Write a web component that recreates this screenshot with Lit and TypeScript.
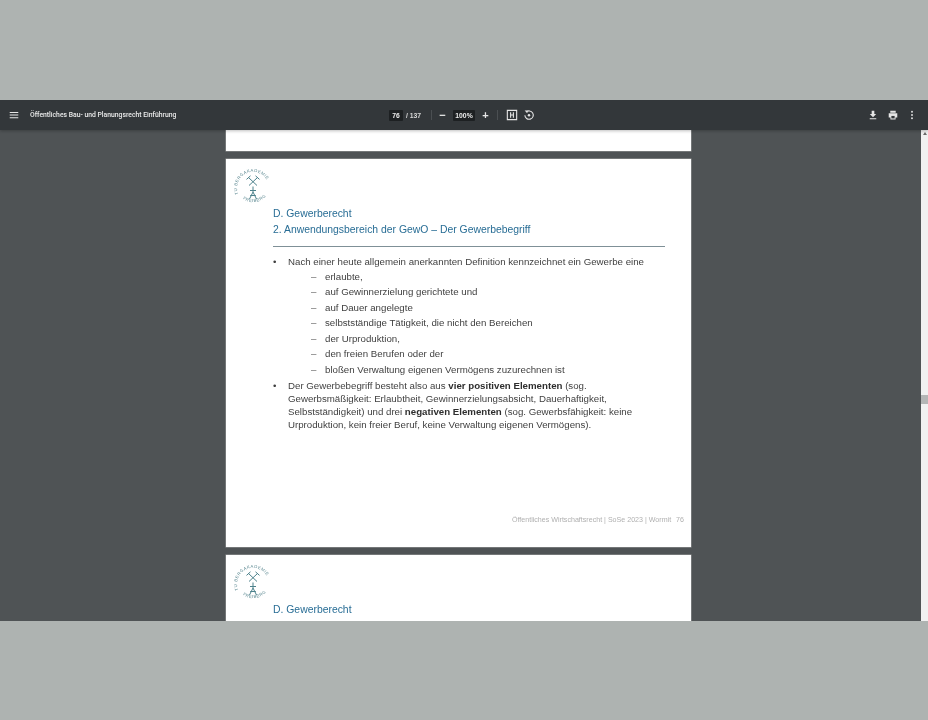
import { LitElement, html, css, svg } from "lit";
import { customElement } from "lit/decorators.js";

const logo = (id: string) => html`<svg class="logo" viewBox="0 0 36 40" width="36" height="40" aria-hidden="true">
  <defs>
    <path id="top${id}" d="M4.2 29 A16 16 0 1 1 31.8 29"></path>
    <path id="bot${id}" d="M6.2 30.5 A17.5 17.5 0 0 0 29.8 30.5"></path>
  </defs>
  <text class="ring"><textPath href="#top${id}" startOffset="2">TU BERGAKADEMIE</textPath></text>
  <text class="ring"><textPath href="#bot${id}" startOffset="2">FREIBERG</textPath></text>
  <g class="mark">
    <path d="M13.5 10.5 L22 18.5 M22.5 10.5 L14 18.5 M11.5 12.4 L15.5 8.8 M20.5 8.8 L24.5 12.4"></path>
    <path d="M18 19.5 L18 25 M14.5 32 L18 25 L21.5 32 M15 23.5 L21 23.5 M15.2 28.5 L20.8 28.5"></path>
  </g>
</svg>`;

const ICONS = {
  menu: svg`<path d="M3.5 5h11v1.3h-11zM3.5 8.4h11v1.3h-11zM3.5 11.8h11v1.3h-11z" fill="currentColor"></path>`,
  fit: svg`<path d="M3 3h12v12H3z" fill="none" stroke="currentColor" stroke-width="1.4"></path><path d="M6.5 5.5h1.4v2.8h2.2V5.5h1.4v7h-1.4V9.7H7.9v2.8H6.5z" fill="currentColor"></path>`,
  rotate: svg`<path d="M5.2 5.4A5.4 5.4 0 1 1 3.7 9.2" fill="none" stroke="currentColor" stroke-width="1.4"></path><path d="M3.4 3.2h3.6v3.6z" fill="currentColor"></path><circle cx="9" cy="9.2" r="1.6" fill="currentColor"></circle>`,
  download: svg`<path d="M7.3 3.5h3.4v4.3h2.4L9 12 4.9 7.8h2.4zM4.8 13.2h8.4v1.3H4.8z" fill="currentColor"></path>`,
  print: svg`<path d="M5.5 3.5h7v2.6h-7zM3.5 6.8h11v5.4h-2.2v2.5H5.7v-2.5H3.5z" fill="currentColor"></path><path d="M6.9 10.2h4.2v3.2H6.9z" fill="#33373a"></path>`,
  more: svg`<circle cx="9" cy="4.8" r="1.2" fill="currentColor"></circle><circle cx="9" cy="9" r="1.2" fill="currentColor"></circle><circle cx="9" cy="13.2" r="1.2" fill="currentColor"></circle>`,
};
const icon = (n: keyof typeof ICONS, cls = "") => html`<svg class="ic ${cls}" viewBox="0 0 18 18" width="14" height="14" aria-hidden="true">${ICONS[n]}</svg>`;

const SUB = ["erlaubte,", "auf Gewinnerzielung gerichtete und", "auf Dauer angelegte", "selbstständige Tätigkeit, die nicht den Bereichen", "der Urproduktion,", "den freien Berufen oder der", "bloßen Verwaltung eigenen Vermögens zuzurechnen ist"];

@customElement("app-root")
export class AppRoot extends LitElement {
  static styles = css`
    :host { display: flex; flex-direction: column; width: 928px; height: 720px; background: #aeb3b1; font-family: "Liberation Sans", Arial, sans-serif; overflow: hidden; }
    .band { height: 100px; flex: none; }
    .viewer { height: 521px; flex: none; display: flex; flex-direction: column; background: #4f5355; overflow: hidden; filter: blur(0.45px); }
    .bar { height: 30px; flex: none; display: grid; grid-template-columns: 1fr auto 1fr; align-items: center; background: #33373a; color: #f1f1f1; padding: 0 9px 0 7px; box-sizing: border-box; z-index: 1; box-shadow: 0 1px 3px rgba(0,0,0,.25); }
    .left { display: flex; align-items: center; gap: 9px; min-width: 0; }
    .title { font-family: Roboto, "Liberation Sans", sans-serif; font-size: 6.8px; font-weight: 500; color: #ececec; white-space: nowrap; }
    .mid { display: flex; align-items: center; font-size: 6.8px; color: #d8d8d8; font-weight: 700; margin-left: -1px; }
    .box { background: #1d2022; color: #eee; height: 11px; line-height: 11px; text-align: center; border-radius: 1px; }
    .pg { width: 14px; margin-right: 3px; }
    .count { width: 16px; white-space: nowrap; }
    .zm { width: 22px; margin: 0 4px; }
    .sep { width: 1px; height: 10px; background: #4b4f52; }
    .sep.a { margin: 0 4px 0 9px; }
    .sep.b { margin: 0 7px 0 5px; }
    .ic { display: block; flex: none; color: #e6e6e6; }
    .rot { margin-left: 3px; }
    .sym { width: 13px; display: flex; justify-content: center; font-size: 11px; line-height: 11px; color: #e6e6e6; }
    .right { display: flex; justify-content: flex-end; align-items: center; gap: 5.5px; }
    .body { flex: 1; display: flex; min-height: 0; }
    .scroller { flex: 1; display: flex; flex-direction: column; align-items: center; gap: 8px; overflow: hidden; padding-right: 4px; box-sizing: border-box; }
    .scrollbar { width: 7px; flex: none; background: #f1f1f1; display: flex; flex-direction: column; align-items: center; box-sizing: border-box; }
    .arrow { margin-top: 2px; width: 0; height: 0; border-left: 2px solid transparent; border-right: 2px solid transparent; border-bottom: 3px solid #6a6a6a; }
    .thumb { width: 7px; height: 9px; background: #b4b6b6; margin-top: 260px; }
    .sheet { width: 465px; background: #fff; flex: none; box-sizing: border-box; box-shadow: 0 0 0 .5px #9a9c9c; position: relative; }
    .stub { height: 21px; }
    .slide { height: 387.5px; padding: 8px 25px 0 9px; display: flex; flex-direction: column; }
    .last { height: 100px; }
    .logo { display: block; flex: none; overflow: visible; margin-bottom: -1px; }
    .ring { font-size: 4.3px; fill: #5e8a93; letter-spacing: .45px; }
    .mark { fill: none; stroke: #4d828c; stroke-width: 1; }
    .content { margin-left: 38px; display: flex; flex-direction: column; }
    h2 { margin: 0; font-weight: 400; font-size: 10.4px; line-height: 16px; color: #286d95; white-space: nowrap; }
    hr { border: 0; border-top: 1px solid #7f9097; margin: 8px 1px 6.5px 0; }
    ul { margin: 0; padding: 0; list-style: none; font-size: 9.7px; color: #3f3f3f; }
    .l1 { display: flex; }
    .l1 > i { font-style: normal; width: 15px; flex: none; }
    .row1 { line-height: 15.5px; }
    .row2 { line-height: 13px; margin-top: 2px; }
    .subs { padding-left: 38px; }
    .subs li { display: flex; line-height: 15.42px; white-space: nowrap; }
    .subs i { font-style: normal; width: 14px; flex: none; color: #666; }
    b { color: #2e2e2e; }
    .foot { position: absolute; right: 7px; bottom: 23px; display: flex; gap: 5px; font-size: 7.1px; color: #b0b0b0; white-space: nowrap; }
  `;

  render() {
    return html`
      <div class="band"></div>
      <div class="viewer">
        <div class="bar">
          <div class="left">${icon("menu")}<span class="title">Öffentliches Bau- und Planungsrecht Einführung</span></div>
          <div class="mid">
            <span class="box pg">76</span><span class="count">/ 137</span><span class="sep a"></span>
            <span class="sym">−</span><span class="box zm">100%</span><span class="sym">+</span><span class="sep b"></span>
            ${icon("fit")}${icon("rotate", "rot")}
          </div>
          <div class="right">${icon("download")}${icon("print")}${icon("more")}</div>
        </div>
        <div class="body">
          <div class="scroller">
            <div class="sheet stub"></div>
            <div class="sheet slide">
              ${logo("a")}
              <div class="content">
                <h2>D. Gewerberecht</h2>
                <h2>2. Anwendungsbereich der GewO – Der Gewerbebegriff</h2>
                <hr />
                <ul>
                  <li class="l1 row1"><i>•</i><span>Nach einer heute allgemein anerkannten Definition kennzeichnet ein Gewerbe eine</span></li>
                  <li><ul class="subs">${SUB.map((s) => html`<li><i>–</i><span>${s}</span></li>`)}</ul></li>
                  <li class="l1 row2"><i>•</i><span>Der Gewerbebegriff besteht also aus <b>vier positiven Elementen</b> (sog. Gewerbsmäßigkeit: Erlaubtheit, Gewinnerzielungsabsicht, Dauerhaftigkeit, Selbstständigkeit) und drei <b>negativen Elementen</b> (sog. Gewerbsfähigkeit: keine Urproduktion, kein freier Beruf, keine Verwaltung eigenen Vermögens).</span></li>
                </ul>
              </div>
              <div class="foot"><span>Öffentliches Wirtschaftsrecht | SoSe 2023 | Wormit</span><span>76</span></div>
            </div>
            <div class="sheet slide last">
              ${logo("b")}
              <div class="content">
                <h2>D. Gewerberecht</h2>
                <h2>2. Anwendungsbereich der GewO – Der Gewerbebegriff</h2>
              </div>
            </div>
          </div>
          <div class="scrollbar"><div class="arrow"></div><div class="thumb"></div></div>
        </div>
      </div>
      <div class="band"></div>
    `;
  }
}
